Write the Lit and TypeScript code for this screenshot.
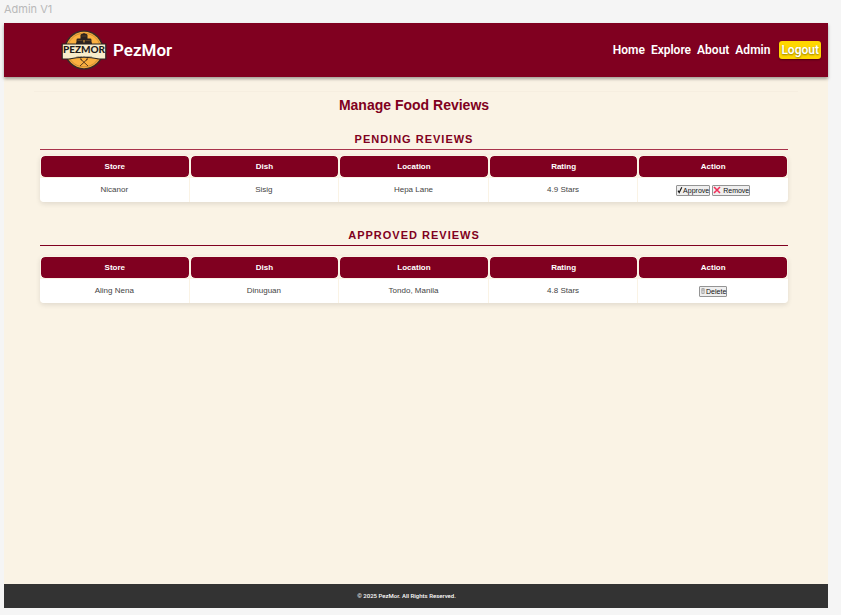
import { LitElement, html, css, svg } from "lit";
import { customElement, property } from "lit/decorators.js";

interface Review {
  store: string;
  dish: string;
  location: string;
  rating: string;
}

const checkIcon = html`<svg class="icon check" viewBox="0 0 6 8" aria-hidden="true">
  <path d="M1 4.6 L2.2 6.6 L4.8 1.2" fill="none" stroke="#111" stroke-width="1.1" />
</svg>`;

const crossIcon = html`<svg class="icon cross" viewBox="0 0 8 8" aria-hidden="true">
  <path d="M1 1 L7 7 M7 1 L1 7" fill="none" stroke="#f0305a" stroke-width="1.6" />
</svg>`;

const binIcon = html`<svg class="icon bin" viewBox="0 0 4 8" aria-hidden="true">
  <path d="M0.8 1.5 H3.2 V6.5 H0.8 Z M0.8 3 H3.2" fill="#ddd" stroke="#8a8a8a" stroke-width="0.6" />
</svg>`;

const barrel = (x: number, y: number) => svg`
  <rect x=${x} y=${y} width="7" height="6" rx="1.4" fill="#2b2320" />
  <path d="M${x + 1} ${y + 2} h5" stroke="#8a5f2a" stroke-width="0.5" />`;

@customElement("pez-logo")
export class PezLogo extends LitElement {
  static styles = css`
    :host { display: block; width: 46px; height: 40px; }
    .logo { display: block; width: 100%; height: 100%; }
    .word { font: 900 10px Lato, sans-serif; fill: #1f1b1a; }
    .tag { font: 700 2px Lato, sans-serif; fill: #6b6152; }
  `;

  render() {
    return html`<svg class="logo" viewBox="0 0 46 40" role="img" aria-label="PezMor logo">
      <circle cx="23" cy="20" r="19.8" fill="#3b2a26" />
      <circle cx="23" cy="20" r="18.2" fill="#fbb040" />
      <circle cx="23" cy="20" r="16.8" fill="none" stroke="#8a5a22" stroke-width="0.4" />
      ${barrel(19.5, 4)} ${barrel(15.5, 8.5)} ${barrel(23.5, 8.5)}
      <path d="M21 4 l2 -1 l2 1 Z M15 14.5 v-2 h16 v2 Z" fill="#2b2320" />
      <path d="M1.2 14 H44.8 V29 H38 Q23 25.5 8 29 H1.2 Z" fill="#f8eccb" stroke="#2b2320" stroke-width="1.2" />
      <text class="word" x="23" y="22.5" text-anchor="middle">PEZMOR</text>
      <text class="tag" x="23" y="26.5" text-anchor="middle">FOOD REVIEWS</text>
      <path d="M19.5 29 L27 36 M26.5 29 L19 36" stroke="#4a2d18" stroke-width="0.9" fill="none" />
      <path d="M18.8 28.4 l2 0.4 l-0.4 2 Z M27.2 28.4 l-2 0.4 l0.4 2 Z" fill="#4a2d18" />
    </svg>`;
  }
}

@customElement("review-section")
export class ReviewSection extends LitElement {
  @property() heading = "";
  @property() kind: "pending" | "approved" = "pending";
  @property({ attribute: false }) reviews: Review[] = [];

  static styles = css`
    :host { display: block; }
    .heading {
      margin: 0;
      padding-bottom: 3px;
      border-bottom: 1px solid #a8324b;
      color: #800020;
      font-size: 11px;
      line-height: 14px;
      font-weight: 700;
      letter-spacing: 1px;
      text-align: center;
      text-transform: uppercase;
    }
    .heading.approved { border-bottom-color: #800020; }
    .reviews {
      width: 100%;
      margin-top: 5px;
      table-layout: fixed;
      border-collapse: separate;
      border-spacing: 0;
      border-radius: 4px;
      box-shadow: 0 2px 5px rgba(0, 0, 0, 0.1);
      font-size: 8px;
      line-height: 10px;
      text-align: center;
    }
    .reviews.approved { margin-top: 10px; }
    .head {
      padding: 6px 5px 5px;
      border: 1px solid #faf3e5;
      border-radius: 5px;
      background: #800020;
      background-clip: padding-box;
      color: #fff;
      font-weight: 700;
    }
    .cell {
      height: 24px;
      padding: 0;
      border-right: 1px solid #faf3e5;
      background: #fff;
      color: #444;
    }
    .cell:first-child { border-bottom-left-radius: 4px; }
    .cell:last-child { border-right: 0; border-bottom-right-radius: 4px; }
    .actions { display: flex; justify-content: center; gap: 2px; }
    .action {
      display: flex;
      align-items: center;
      height: 11px;
      padding: 0;
      border: 1px solid #949494;
      border-radius: 1px;
      background: #efefef;
      color: #111;
      font: 7px/9px "Liberation Sans", Arial, sans-serif;
      white-space: nowrap;
    }
    .icon { display: block; height: 8px; }
    .check { width: 6px; }
    .cross { width: 8px; margin-right: 2px; }
    .bin { width: 4px; margin: 0 1px; }
  `;

  private actions() {
    return this.kind === "pending"
      ? html`<button class="action" type="button">${checkIcon}Approve</button>
          <button class="action" type="button">${crossIcon}Remove</button>`
      : html`<button class="action" type="button">${binIcon}Delete</button>`;
  }

  render() {
    return html`
      <h2 class="heading ${this.kind}" id="heading">${this.heading}</h2>
      <table class="reviews ${this.kind}" aria-labelledby="heading">
        <thead>
          <tr>
            ${["Store", "Dish", "Location", "Rating", "Action"].map(
              (name) => html`<th class="head" scope="col">${name}</th>`
            )}
          </tr>
        </thead>
        <tbody>
          ${this.reviews.map(
            (r) => html`<tr>
              <td class="cell">${r.store}</td>
              <td class="cell">${r.dish}</td>
              <td class="cell">${r.location}</td>
              <td class="cell">${r.rating}</td>
              <td class="cell"><div class="actions">${this.actions()}</div></td>
            </tr>`
          )}
        </tbody>
      </table>
    `;
  }
}

@customElement("app-root")
export class AppRoot extends LitElement {
  static styles = css`
    :host {
      display: flex;
      flex-direction: column;
      box-sizing: border-box;
      min-height: 100vh;
      padding: 0 13px 7px 4px;
      background: #f5f5f5;
      font-family: "Liberation Sans", Arial, sans-serif;
    }
    .frame-name {
      padding: 2px 0 7px;
      color: #b9b9b9;
      font: 11px/14px Inter, sans-serif;
    }
    .page {
      flex: 1;
      display: flex;
      flex-direction: column;
      background: #faf3e5;
    }
    .bar {
      display: flex;
      align-items: center;
      justify-content: space-between;
      height: 54px;
      padding: 0 7px 0 57px;
      background: #800020;
      box-shadow: 0 2px 3px rgba(0, 0, 0, 0.35);
      font-family: Roboto, sans-serif;
      color: #fff;
    }
    .brand {
      display: flex;
      align-items: center;
      gap: 6px;
      color: inherit;
      text-decoration: none;
      font-size: 17px;
      line-height: 20px;
      font-weight: 600;
    }
    .nav { display: flex; align-items: center; gap: 9px; }
    .links { display: flex; gap: 6px; }
    .link {
      color: inherit;
      text-decoration: none;
      font-size: 12px;
      line-height: 16px;
      font-weight: 600;
    }
    .logout {
      padding: 0 2px;
      border: 0;
      border-radius: 3px;
      background: #ffd700;
      color: #fff;
      font: 600 12px/18px Roboto, sans-serif;
      text-shadow: 0 1px 2px rgba(0, 0, 0, 0.45);
      box-shadow: 0 1px 2px rgba(0, 0, 0, 0.4);
    }
    .content {
      flex: 1;
      display: flex;
      flex-direction: column;
      margin: 14px 30px 0;
      padding: 5px 10px 0 6px;
      border-top: 1px solid #f6eee0;
    }
    .title {
      margin: 0 0 19px;
      color: #800020;
      font-size: 14px;
      line-height: 16px;
      font-weight: 700;
      text-align: center;
    }
    .sections { display: flex; flex-direction: column; gap: 26px; }
    .footer {
      padding: 7px 26px 7px 7px;
      background: #333;
      color: #fff;
      font: 500 6px/10px Roboto, sans-serif;
      text-align: center;
    }
  `;

  render() {
    return html`
      <div class="frame-name">Admin V1</div>
      <div class="page">
        <header class="bar">
          <a class="brand" href="#"><pez-logo></pez-logo>PezMor</a>
          <div class="nav">
            <nav class="links">
              ${["Home", "Explore", "About", "Admin"].map(
                (name) => html`<a class="link" href="#">${name}</a>`
              )}
            </nav>
            <button class="logout" type="button">Logout</button>
          </div>
        </header>
        <main class="content">
          <h1 class="title">Manage Food Reviews</h1>
          <div class="sections">
            <review-section
              heading="Pending Reviews"
              kind="pending"
              .reviews=${[{ store: "Nicanor", dish: "Sisig", location: "Hepa Lane", rating: "4.9 Stars" }]}
            ></review-section>
            <review-section
              heading="Approved Reviews"
              kind="approved"
              .reviews=${[{ store: "Aling Nena", dish: "Dinuguan", location: "Tondo, Manila", rating: "4.8 Stars" }]}
            ></review-section>
          </div>
        </main>
        <footer class="footer">© 2025 PezMor. All Rights Reserved.</footer>
      </div>
    `;
  }
}
